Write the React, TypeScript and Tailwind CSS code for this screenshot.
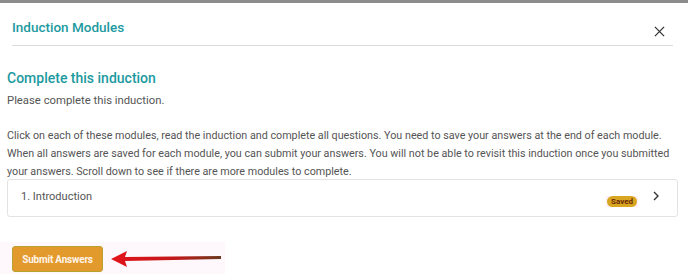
import React from "react";

export default function App() {
  return (
    <div className="w-[688px] h-[274px] bg-white overflow-hidden relative" style={{ fontFamily: "Roboto, 'Liberation Sans', sans-serif" }}>
      <div className="h-[3px] bg-[#8c8c8c]" />
      <div className="flex items-center justify-between ml-[12px] mr-[15px] h-[43px] border-b border-[#dcdcdc] pt-[6px]">
        <div className="text-[13.5px] text-[#1c9aa0] font-medium">Induction Modules</div>
        <svg width="11" height="11" viewBox="0 0 12 12" className="mr-[8px] mt-[8px]">
          <path d="M1 1 L11 11 M11 1 L1 11" stroke="#333" strokeWidth="1.4" />
        </svg>
      </div>
      <div className="px-[7px]">
        <div className="mt-[22px] text-[14px] font-medium text-[#1c9aa0] leading-[20px]">Complete this induction</div>
        <div className="mt-[5px] text-[11.3px] text-[#555] leading-[16px]">Please complete this induction.</div>
        <div className="mt-[18px] text-[10.75px] text-[#555] leading-[18px] w-[670px]">
          Click on each of these modules, read the induction and complete all questions. You need to save your answers at the end of each module. When all answers are saved for each module, you can submit your answers. You will not be able to revisit this induction once you submitted your answers. Scroll down to see if there are more modules to complete.
        </div>
        <div className="mt-[-2px] h-[38px] border border-[#e3e3e3] rounded-[3px] flex items-center pl-[13px] pr-[17px] w-[671px]">
          <div className="text-[11px] text-[#555] flex-1 -mt-[2px]">1. Introduction</div>
          <div className="bg-[#fdf0fa] px-[1px] py-[0px] mt-[7px]">
            <div className="bg-[#d9a621] text-[#6b2a06] text-[8px] font-bold rounded-full px-[4px] h-[11px] leading-[11px]">Saved</div>
          </div>
          <svg width="8" height="10" viewBox="0 0 8 10" className="ml-[14px] -mt-[5px]">
            <path d="M2 1 L6 5 L2 9" stroke="#333" strokeWidth="1.4" fill="none" />
          </svg>
        </div>
      </div>
      <div className="mt-[25px] flex items-center bg-[#fef7fc] w-[225px] h-[34px] pl-[12px]">
        <div className="h-[26px] w-[91px] bg-[#e39a2c] border border-[#b9a130] rounded-[3px] flex items-center justify-center text-[10px] font-bold text-[#fff4e8] tracking-[-0.2px]">Submit Answers</div>
        <svg width="112" height="20" viewBox="0 0 112 20" className="ml-[7px]">
          <defs>
            <linearGradient id="ag" x1="0" x2="1" y1="0" y2="0">
              <stop offset="0" stopColor="#e3141b" />
              <stop offset="0.6" stopColor="#c01818" />
              <stop offset="1" stopColor="#6b3a1e" />
            </linearGradient>
          </defs>
          <path d="M1 10 L17 2 L15 8 L111 7 L111 10 L15 12 L17 18 Z" fill="url(#ag)" />
        </svg>
      </div>
    </div>
  );
}
